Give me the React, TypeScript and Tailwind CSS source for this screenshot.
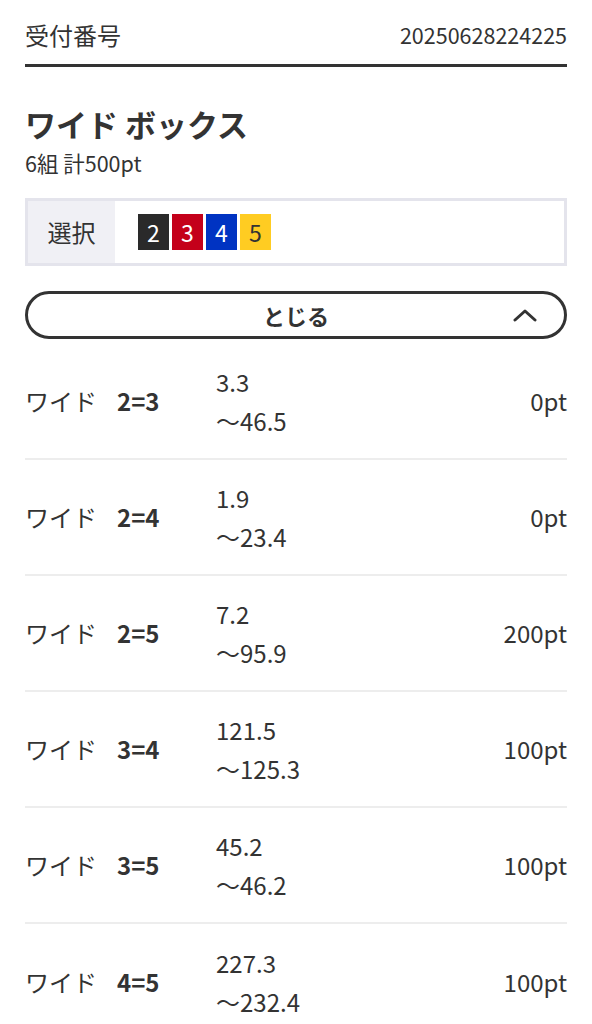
import React from "react";

const font = { fontFamily: '"Noto Sans CJK JP", "Noto Sans", sans-serif' };

const numbers = [
	{ n: "2", cls: "bg-[#2a2a2a] text-white" },
	{ n: "3", cls: "bg-[#c4001a] text-white" },
	{ n: "4", cls: "bg-[#0033c2] text-white" },
	{ n: "5", cls: "bg-[#ffcc22] text-[#333]" },
];

const rows = [
	{ combo: "2=3", min: "3.3", max: "〜46.5", pt: "0pt" },
	{ combo: "2=4", min: "1.9", max: "〜23.4", pt: "0pt" },
	{ combo: "2=5", min: "7.2", max: "〜95.9", pt: "200pt" },
	{ combo: "3=4", min: "121.5", max: "〜125.3", pt: "100pt" },
	{ combo: "3=5", min: "45.2", max: "〜46.2", pt: "100pt" },
	{ combo: "4=5", min: "227.3", max: "〜232.4", pt: "100pt" },
];

const App = () => {
	return (
		<div className="min-h-screen bg-white px-[25px] text-[#333]" style={font}>
			{/* header */}
			<div className="flex items-center justify-between h-[67px] pt-[6px] border-b-[3px] border-[#333]">
				<span className="text-[24px]">受付番号</span>
				<span className="text-[21.5px]">20250628224225</span>
			</div>

			<div className="pt-[37px]">
				<h1 className="text-[31px] font-bold leading-[40px]">ワイド ボックス</h1>
				<p className="text-[21.5px] leading-[30px] mt-[4px]">6組 計500pt</p>
			</div>

			{/* selection */}
			<div className="mt-[20px] flex h-[68px] border-[3px] border-[#e4e4ec]">
				<div className="w-[87px] bg-[#f0f0f5] flex items-center justify-center text-[24px]">
					選択
				</div>
				<div className="flex items-center gap-[3px] pl-[23px]">
					{numbers.map((item) => (
						<span
							key={item.n}
							className={`w-[31px] h-[36px] flex items-center justify-center text-[23px] ${item.cls}`}
						>
							{item.n}
						</span>
					))}
				</div>
			</div>

			{/* toggle */}
			<button className="mt-[25px] w-full h-[48px] rounded-full border-[3px] border-[#333] relative flex items-center justify-center">
				<span className="text-[22px] font-bold">とじる</span>
				<svg
					className="absolute right-[27px] top-1/2 -translate-y-1/2"
					width="24"
					height="14"
					viewBox="0 0 24 14"
					fill="none"
				>
					<path d="M2 12 L12 3 L22 12" stroke="#333" strokeWidth="3" strokeLinecap="round" strokeLinejoin="round" />
				</svg>
			</button>

			{/* list */}
			<div className="mt-[5px]">
				{rows.map((row, i) => (
					<div
						key={row.combo}
						className={`flex items-center h-[116px] ${i < rows.length - 1 ? "border-b-2 border-[#ededed]" : ""}`}
					>
						<span className="w-[92px] text-[24px]">ワイド</span>
						<span className="w-[99px] text-[24px] font-bold">{row.combo}</span>
						<div className="flex-1 text-[24px] leading-[39px]">
							<div>{row.min}</div>
							<div>{row.max}</div>
						</div>
						<span className="text-[24px]">{row.pt}</span>
					</div>
				))}
			</div>
		</div>
	);
};

export default App;
